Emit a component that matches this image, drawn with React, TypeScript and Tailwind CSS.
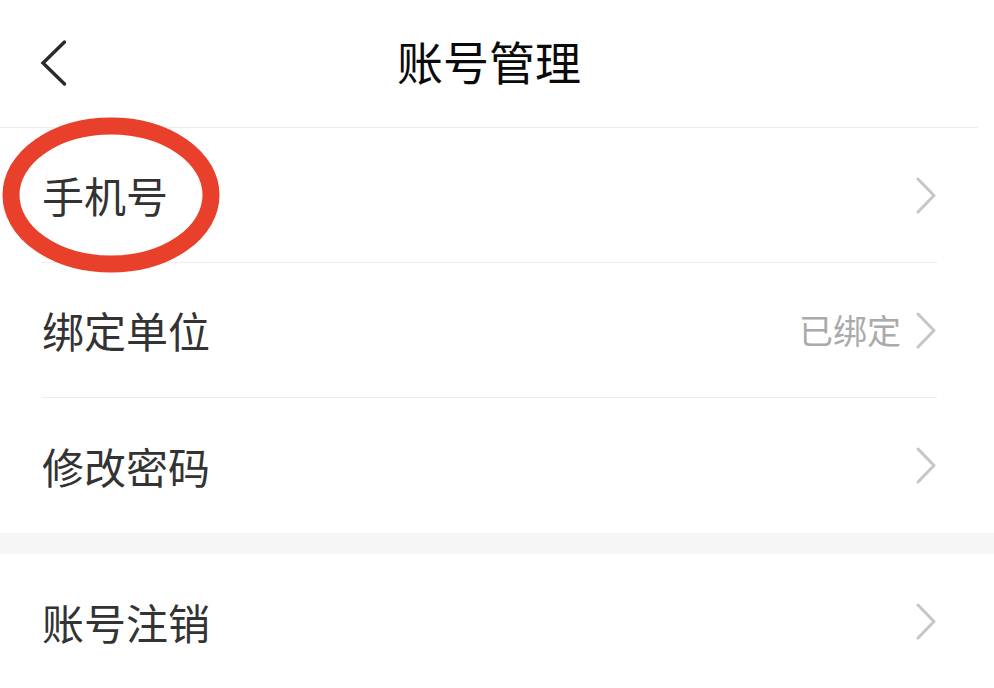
type Row = { label: string; value?: string };

const groupOne: Row[] = [{ label: '手机号' }, { label: '绑定单位', value: '已绑定' }, { label: '修改密码' }];
const groupTwo: Row[] = [{ label: '账号注销' }];

function Arrow() {
  return (
    <svg width="22" height="37" viewBox="0 0 22 37" fill="none" className="shrink-0">
      <path d="M3 2 L19 18.5 L3 35" stroke="#c6c6c6" strokeWidth="3" strokeLinecap="round" strokeLinejoin="round" />
    </svg>
  );
}

function BackIcon() {
  return (
    <svg width="28" height="48" viewBox="0 0 28 48" fill="none">
      <path d="M24.5 3 L3 24 L24.5 45" stroke="#2a2a2a" strokeWidth="3.4" strokeLinecap="round" strokeLinejoin="miter" />
    </svg>
  );
}

function ListRow({ row, last }: { row: Row; last: boolean }) {
  return (
    <div className="pl-[42px] pr-[57px]">
      <div className={`h-[135px] flex items-center justify-between ${last ? '' : 'border-b border-[#ececec]'}`}>
        <span className="text-[42px] text-[#333333] leading-none">{row.label}</span>
        <div className="flex items-center gap-[14px]">
          {row.value && <span className="text-[34px] text-[#aaaaaa] leading-none">{row.value}</span>}
          <Arrow />
        </div>
      </div>
    </div>
  );
}

export default function App() {
  return (
    <div
      className="w-[994px] h-[688px] overflow-hidden bg-white relative"
      style={{ fontFamily: '"Noto Sans CJK SC", "Noto Sans", sans-serif' }}
    >
      {/* Header */}
      <div className="h-[128px] flex items-center relative border-b border-[#ececec] mr-[16px]">
        <div className="absolute left-[40px] top-[39px]">
          <BackIcon />
        </div>
        <h1 className="w-full text-center text-[46px] text-[#0a0a0a] font-normal leading-none -mt-[8px]">账号管理</h1>
      </div>

      {groupOne.map((row, i) => (
        <ListRow key={row.label} row={row} last={i === groupOne.length - 1} />
      ))}

      <div className="h-[21px] bg-[#f6f6f6]" />

      {groupTwo.map((row, i) => (
        <ListRow key={row.label} row={row} last={i === groupTwo.length - 1} />
      ))}

      {/* Hand-drawn highlight */}
      <svg className="absolute left-0 top-0 pointer-events-none" width="994" height="688">
        <ellipse cx="111" cy="195" rx="100" ry="69" fill="none" stroke="#e8402a" strokeWidth="17" />
      </svg>
    </div>
  );
}
